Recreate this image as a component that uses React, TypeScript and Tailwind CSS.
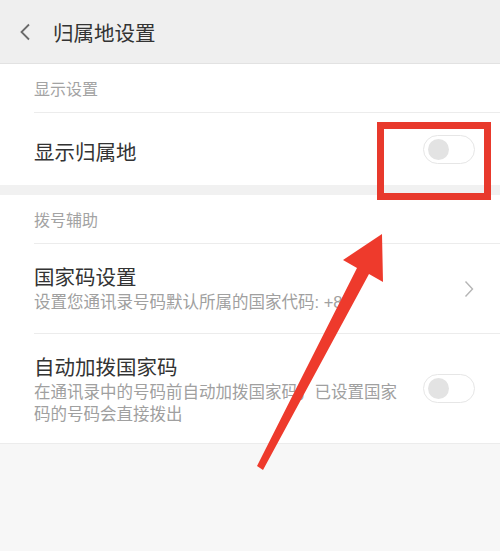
import React from "react";

const font = { fontFamily: '"Liberation Sans", "Noto Sans CJK SC", sans-serif' };

function Toggle() {
  return (
    <div className="w-[52px] h-[29px] rounded-full border border-[#e6e6e6] bg-white flex items-center pl-[4px] shrink-0">
      <div className="w-[21px] h-[21px] rounded-full bg-[#e3e3e3]" />
    </div>
  );
}

export default function App() {
  return (
    <div
      className="relative w-[500px] h-[551px] overflow-hidden bg-[#f7f7f7] text-[#333]"
      style={font}
    >
      {/* Header */}
      <div className="h-[64px] bg-[#efefef] border-b border-[#e2e2e2] flex items-center">
        <svg width="14" height="18" viewBox="0 0 14 18" className="ml-[18px]">
          <path d="M11 1.5 L3.5 9 L11 16.5" fill="none" stroke="#6a6a6a" strokeWidth="1.8" />
        </svg>
        <div className="ml-[21px] text-[20.5px] leading-[26px] text-[#333] mt-[4px]">归属地设置</div>
      </div>

      {/* Section 1 */}
      <div className="bg-white">
        <div className="h-[48px] flex items-center pl-[34px] pt-[3px] text-[16px] text-[#a3a3a3]">
          显示设置
        </div>
        <div className="ml-[34px] border-t border-[#ececec]" />
        <div className="h-[72px] flex items-center justify-between pl-[34px] pr-[25px]">
          <div className="text-[20.5px] leading-[26px] mt-[7px]">显示归属地</div>
          <Toggle />
        </div>
      </div>

      <div className="h-[10px] bg-[#f1f1f1]" />

      {/* Section 2 */}
      <div className="bg-white">
        <div className="h-[48px] flex items-center pl-[34px] pt-[3px] text-[16px] text-[#a3a3a3]">
          拨号辅助
        </div>
        <div className="ml-[34px] border-t border-[#ececec]" />
        <div className="h-[89px] flex items-center justify-between pl-[34px] pr-[26px]">
          <div className="flex flex-col pt-[1px]">
            <div className="text-[20.5px] leading-[26px]">国家码设置</div>
            <div className="text-[16.5px] leading-[22px] text-[#a0a0a0]">
              设置您通讯录号码默认所属的国家代码: +86
            </div>
          </div>
          <svg width="10" height="18" viewBox="0 0 10 18">
            <path d="M1.5 1.5 L8.5 9 L1.5 16.5" fill="none" stroke="#b5b5b5" strokeWidth="1.4" />
          </svg>
        </div>
        <div className="ml-[34px] border-t border-[#ececec]" />
        <div className="h-[109px] flex items-center justify-between pl-[34px] pr-[25px]">
          <div className="flex flex-col w-[372px] pt-[2px]">
            <div className="text-[20.5px] leading-[26px]">自动加拨国家码</div>
            <div className="text-[16.5px] leading-[22px] text-[#a0a0a0]">
              在通讯录中的号码前自动加拨国家码，已设置国家码的号码会直接拨出
            </div>
          </div>
          <Toggle />
        </div>
      </div>
      <div className="border-t border-[#ececec]" />

      {/* Red highlight box */}
      <div className="absolute left-[377px] top-[122px] w-[114px] h-[78px] border-[7px] border-[#e8392c]" />

      {/* Arrow */}
      <svg
        className="absolute left-0 top-0 pointer-events-none"
        width="500"
        height="551"
        viewBox="0 0 500 551"
      >
        <polygon
          points="257,466 357,268 343,260 382,234 383,282 369,274 263,470"
          fill="#ee3a2c"
        />
      </svg>
    </div>
  );
}
